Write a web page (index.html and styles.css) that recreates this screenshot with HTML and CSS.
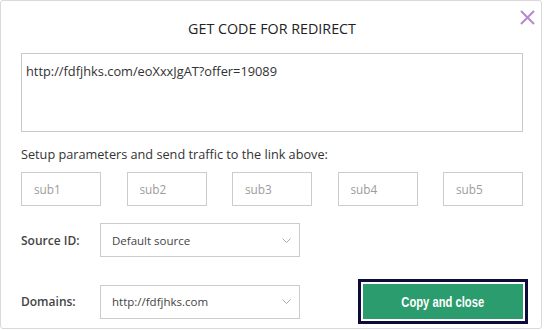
FILE: index.html
```html
<!DOCTYPE html>
<html lang="en">
<head>
    <meta charset="UTF-8">
    <meta name="viewport" content="width=device-width, initial-scale=1.0">
    <title>Get Code For Redirect</title>
    <link rel="stylesheet" href="styles.css">
</head>
<body>

    <div class="modal">
        <button class="close-button" aria-label="Close">
            <svg width="15" height="15" viewBox="0 0 15 15" fill="none" xmlns="http://www.w3.org/2000/svg">
                <path d="M1 1L14 14M14 1L1 14" stroke="#b887cf" stroke-width="2"></path>
            </svg>
        </button>

        <h1 class="modal-title">GET CODE FOR REDIRECT</h1>

        <textarea class="link-box" readonly>http://fdfjhks.com/eoXxxJgAT?offer=19089</textarea>

        <p class="hint">Setup parameters and send traffic to the link above:</p>

        <div class="sub-row">
            <input class="sub-input" type="text" placeholder="sub1">
            <input class="sub-input" type="text" placeholder="sub2">
            <input class="sub-input" type="text" placeholder="sub3">
            <input class="sub-input" type="text" placeholder="sub4">
            <input class="sub-input" type="text" placeholder="sub5">
        </div>

        <div class="field-row">
            <label class="field-label" for="sourceId">Source ID:</label>
            <select class="dropdown" id="sourceId">
                <option>Default source</option>
            </select>
        </div>

        <div class="field-row domains-row">
            <label class="field-label" for="domainId">Domains:</label>
            <select class="dropdown" id="domainId">
                <option>http://fdfjhks.com</option>
            </select>
            <button class="copy-button"><span class="copy-label">Copy and close</span></button>
        </div>
    </div>

</body>
</html>
```

FILE: styles.css
```css
* {
    box-sizing: border-box;
}
body {
    margin: 0;
    background-color: white;
    font-family: "Open Sans", sans-serif;
    color: #333333;
}
.modal {
    position: relative;
    width: 542px;
    height: 329px;
    padding: 18px 18px 0 20px;
    border: 1px solid #d9d9d9;
    border-radius: 3px;
    background-color: white;
}
.close-button {
    position: absolute;
    top: 9px;
    right: 6px;
    width: 15px;
    height: 15px;
    padding: 0;
    display: flex;
    border: none;
    background: none;
    cursor: pointer;
}
.modal-title {
    margin: 0;
    font-size: 14.3px;
    line-height: 20px;
    font-weight: 400;
    text-align: center;
    color: #222222;
}
.link-box {
    display: block;
    width: 100%;
    height: 79px;
    margin-top: 14px;
    padding: 7px 4px;
    border: 1px solid #c9c9c9;
    font-family: "Open Sans", sans-serif;
    font-size: 12.8px;
    line-height: 20px;
    color: #333333;
    resize: none;
    outline: none;
}
.hint {
    margin: 13px 0 0;
    font-size: 12.7px;
    line-height: 18px;
    color: #333333;
}
.sub-row {
    display: flex;
    justify-content: space-between;
    margin-top: 9px;
}
.sub-input {
    width: 80px;
    height: 34px;
    padding: 0 12px;
    border: 1px solid #cccccc;
    font-family: "Open Sans", sans-serif;
    font-size: 11.8px;
    color: #333333;
    outline: none;
}
.sub-input::placeholder {
    color: #9c9c9c;
}
.field-row {
    display: flex;
    align-items: center;
    margin-top: 17px;
}
.domains-row {
    margin-top: 27px;
}
.field-label {
    width: 79px;
    font-size: 12px;
    font-weight: 600;
    color: #444444;
}
.dropdown {
    width: 200px;
    height: 34px;
    padding: 0 24px 0 11px;
    border: 1px solid #cccccc;
    border-radius: 0;
    background-color: white;
    appearance: none;
    background-image: url("data:image/svg+xml,%3Csvg width='9' height='5' viewBox='0 0 9 5' fill='none' xmlns='http://www.w3.org/2000/svg'%3E%3Cpath d='M0.5 0.5L4.5 4.5L8.5 0.5' stroke='%23ababab' stroke-width='1'/%3E%3C/svg%3E");
    background-repeat: no-repeat;
    background-position: right 8px center;
    font-family: "Open Sans", sans-serif;
    font-size: 11.5px;
    color: #444444;
    outline: none;
}
.copy-button {
    margin-left: auto;
    width: 160px;
    height: 35px;
    border: none;
    border-radius: 0;
    background-color: #2b9c6d;
    color: white;
    font-family: "Liberation Sans", Arial, sans-serif;
    font-size: 14px;
    font-weight: 700;
    outline: 3px solid #0e0b3c;
    outline-offset: 2px;
    cursor: pointer;
}
/* the original face is a narrow sans, squeeze the regular one to its width */
.copy-label {
    display: inline-block;
    transform: scaleX(0.8);
}
```
